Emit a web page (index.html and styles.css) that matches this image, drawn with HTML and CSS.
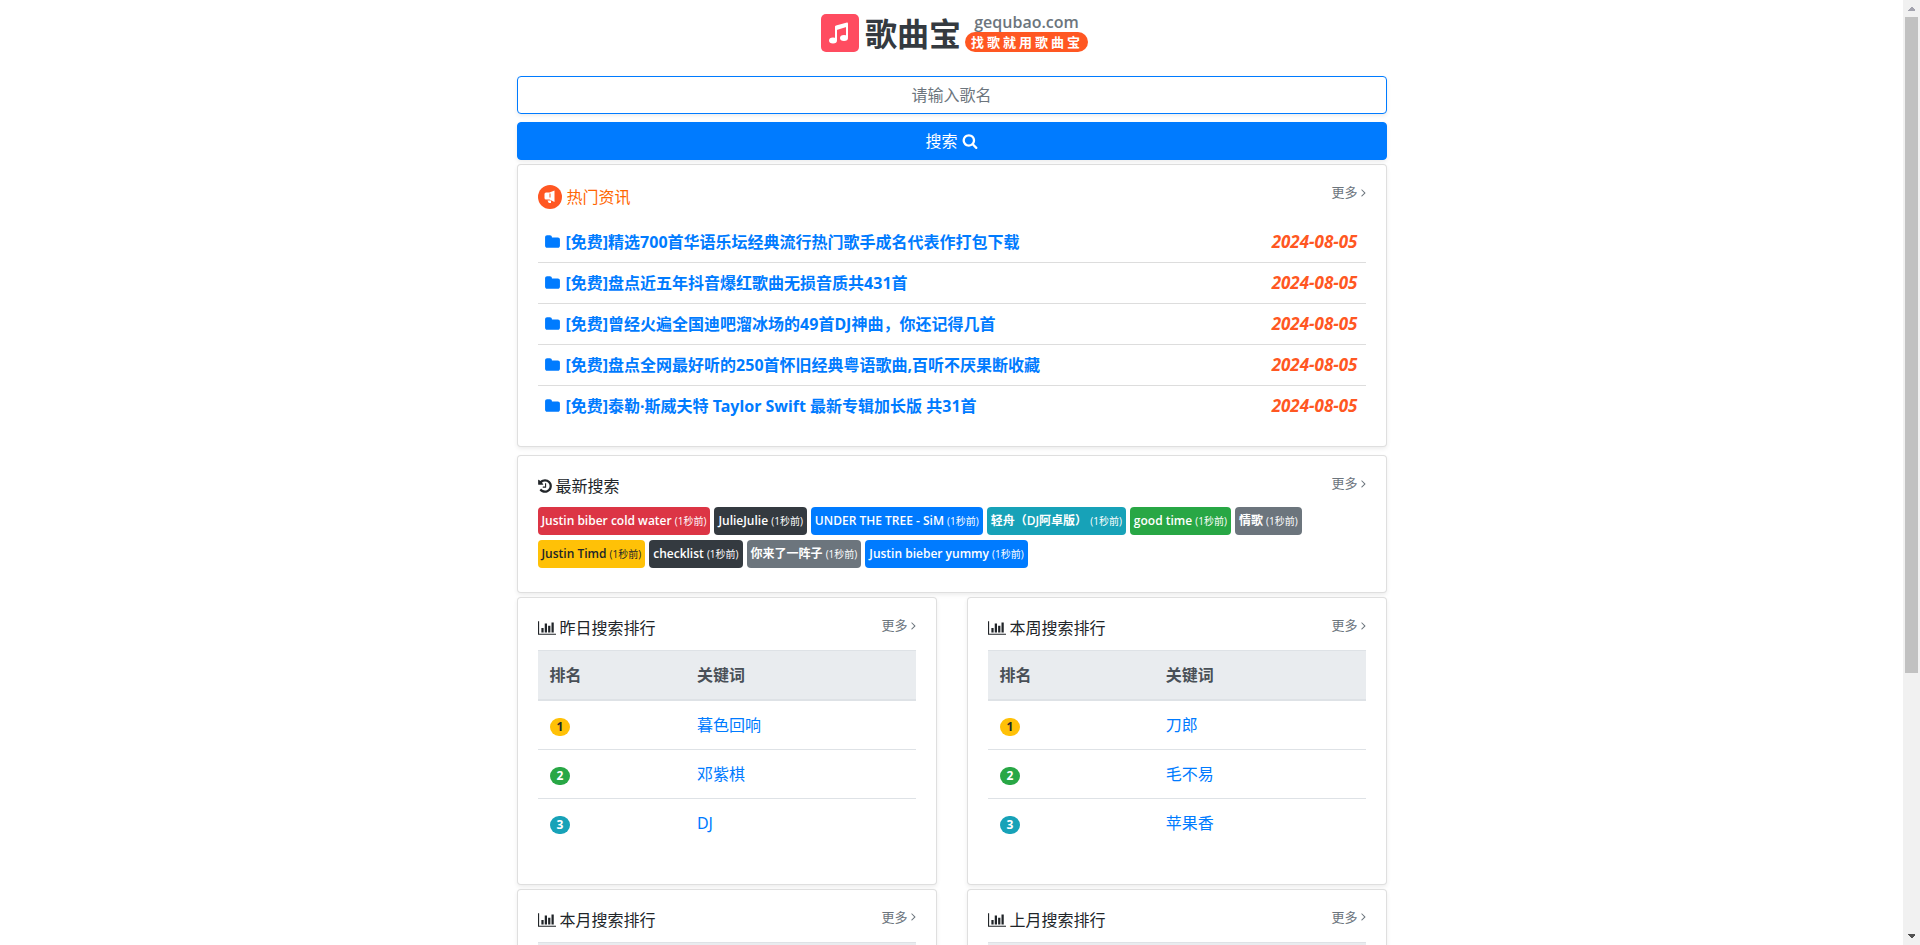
FILE: index.html
```html
<!DOCTYPE html>
<html lang="zh-CN">
<head>
<meta charset="utf-8">
<title>歌曲宝</title>
<link rel="stylesheet" href="styles.css">
</head>
<body>
<svg class="sprite" aria-hidden="true">
  <symbol id="search" viewBox="0 0 1664 1792"><path d="M1152 832q0-185-131.500-316.500t-316.500-131.500-316.500 131.500-131.500 316.500 131.500 316.500 316.500 131.500 316.500-131.500 131.500-316.500zm512 832q0 52-38 90t-90 38q-54 0-90-38l-343-342q-179 124-399 124-143 0-273.500-55.500t-225-150-150-225-55.500-273.500 55.500-273.500 150-225 225-150 273.500-55.500 273.500 55.500 225 150 150 225 55.500 273.500q0 220-124 399l343 343q37 37 37 90z"/></symbol>
  <symbol id="folder" viewBox="0 0 1664 1792"><path d="M1664 608v704q0 92-66 158t-158 66h-1216q-92 0-158-66t-66-158v-960q0-92 66-158t158-66h320q92 0 158 66t66 158v32h672q92 0 158 66t66 158z"/></symbol>
  <symbol id="chart" viewBox="0 0 2048 1792"><path d="M640 896v512h-256v-512h256zm384-512v1024h-256v-1024h256zm1024 1152v128h-2048v-1536h128v1408h1920zm-640-896v768h-256v-768h256zm384-384v1152h-256v-1152h256z"/></symbol>
  <symbol id="history" viewBox="0 0 1536 1792"><path d="M1536 896q0 156-61 298t-164 245-245 164-298 61q-172 0-327-72.500t-264-204.500q-7-10-6.500-22.500t8.500-20.500l137-138q10-9 25-9 16 2 23 12 73 95 179 147t225 52q104 0 198.500-40.500t163.500-109.500 109.500-163.500 40.500-198.500-40.500-198.500-109.500-163.500-163.500-109.500-198.500-40.500q-98 0-188 35.500t-160 101.500l137 138q31 30 14 69-17 40-59 40h-448q-26 0-45-19t-19-45v-448q0-42 40-59 39-17 69 14l130 129q107-101 244.500-156.500t284.500-55.500q156 0 298 61t245 164 164 245 61 298zm-640-288v448q0 14-9 23t-23 9h-320q-14 0-23-9t-9-23v-64q0-14 9-23t23-9h224v-352q0-14 9-23t23-9h64q14 0 23 9t9 23z"/></symbol>
  <symbol id="angle" viewBox="0 0 640 1792"><path d="M595 960q0 13-10 23l-466 466q-10 10-23 10t-23-10l-50-50q-10-10-10-23t10-23l393-393-393-393q-10-10-10-23t10-23l50-50q10-10 23-10t23 10l466 466q10 10 10 23z"/></symbol>
</svg>
<div class="viewport">
  <main class="container">
    <header class="brand">
      <svg class="brand-icon" viewBox="0 0 38 38" aria-hidden="true"><rect width="38" height="38" rx="5" fill="#ff4c60"/><path d="M15 26V14M26 23.500V10" fill="none" stroke="#fff" stroke-width="2"/><path d="M14 12.500Q14 11.800 15 11.500L26 8.500Q27 8.400 27 9.200V12.500L14 16.500z" fill="#fff"/><ellipse cx="12" cy="26.500" rx="4" ry="3" fill="#fff"/><ellipse cx="23" cy="24" rx="4" ry="3" fill="#fff"/></svg>
      <h1 class="brand-name">歌曲宝</h1>
      <div class="brand-side">
        <span class="brand-domain">gequbao.com</span>
        <span class="brand-slogan">找歌就用歌曲宝</span>
      </div>
    </header>

    <form class="search">
      <input class="search-input" type="text" placeholder="请输入歌名" aria-label="请输入歌名">
      <button class="search-button" type="button">搜索 <svg class="icon icon-search"><use href="#search"/></svg></button>
    </form>

    <section class="card">
      <div class="card-head">
        <h2 class="card-title news-title"><svg class="news-icon" viewBox="0 0 24 24" aria-hidden="true"><circle cx="12" cy="12" r="12" fill="#ff5722"/><path d="M8 7.500h3.500l5-2v11.500l-5-2.500H8q-1.500 0-1.500-1.500V9q0-1.500 1.500-1.500z" fill="#fff"/><path d="M9.500 15.500h3.500v2.500h-2.200z" fill="#fff"/><path d="M12 8.500v4" stroke="#ff5722" stroke-width="1"/></svg>热门资讯</h2>
        <a class="more" href="#">更多 <svg class="icon icon-angle"><use href="#angle"/></svg></a>
      </div>
      <ul class="news">
        <li><a href="#"><svg class="icon icon-folder"><use href="#folder"/></svg>[免费]精选700首华语乐坛经典流行热门歌手成名代表作打包下载</a><time>2024-08-05</time></li>
        <li><a href="#"><svg class="icon icon-folder"><use href="#folder"/></svg>[免费]盘点近五年抖音爆红歌曲无损音质共431首</a><time>2024-08-05</time></li>
        <li><a href="#"><svg class="icon icon-folder"><use href="#folder"/></svg>[免费]曾经火遍全国迪吧溜冰场的49首DJ神曲，你还记得几首</a><time>2024-08-05</time></li>
        <li><a href="#"><svg class="icon icon-folder"><use href="#folder"/></svg>[免费]盘点全网最好听的250首怀旧经典粤语歌曲,百听不厌果断收藏</a><time>2024-08-05</time></li>
        <li><a href="#"><svg class="icon icon-folder"><use href="#folder"/></svg>[免费]泰勒·斯威夫特 Taylor Swift 最新专辑加长版 共31首</a><time>2024-08-05</time></li>
      </ul>
    </section>

    <section class="card card-recent">
      <div class="card-head">
        <h2 class="card-title"><svg class="icon icon-history"><use href="#history"/></svg>最新搜索</h2>
        <a class="more" href="#">更多 <svg class="icon icon-angle"><use href="#angle"/></svg></a>
      </div>
      <div class="tags">
        <a class="tag red" href="#">Justin biber cold water <small>(1秒前)</small></a>
        <a class="tag dark" href="#">JulieJulie <small>(1秒前)</small></a>
        <a class="tag blue" href="#">UNDER THE TREE - SiM <small>(1秒前)</small></a>
        <a class="tag teal" href="#">轻舟（DJ阿卓版） <small>(1秒前)</small></a>
        <a class="tag green" href="#">good time <small>(1秒前)</small></a>
        <a class="tag gray" href="#">情歌 <small>(1秒前)</small></a>
        <a class="tag yellow" href="#">Justin Timd <small>(1秒前)</small></a>
        <a class="tag dark" href="#">checklist <small>(1秒前)</small></a>
        <a class="tag gray" href="#">你来了一阵子 <small>(1秒前)</small></a>
        <a class="tag blue" href="#">Justin bieber yummy <small>(1秒前)</small></a>
      </div>
    </section>

    <div class="ranks">
      <section class="card">
        <div class="card-head">
          <h2 class="card-title"><svg class="icon icon-chart"><use href="#chart"/></svg>昨日搜索排行</h2>
          <a class="more" href="#">更多 <svg class="icon icon-angle"><use href="#angle"/></svg></a>
        </div>
        <table class="rank">
          <thead><tr><th class="col-day">排名</th><th>关键词</th></tr></thead>
          <tbody>
            <tr><td><span class="pill yellow">1</span></td><td><a href="#">暮色回响</a></td></tr>
            <tr><td><span class="pill green">2</span></td><td><a href="#">邓紫棋</a></td></tr>
            <tr><td><span class="pill teal">3</span></td><td><a href="#">DJ</a></td></tr>
          </tbody>
        </table>
      </section>
      <section class="card">
        <div class="card-head">
          <h2 class="card-title"><svg class="icon icon-chart"><use href="#chart"/></svg>本周搜索排行</h2>
          <a class="more" href="#">更多 <svg class="icon icon-angle"><use href="#angle"/></svg></a>
        </div>
        <table class="rank">
          <thead><tr><th class="col-week">排名</th><th>关键词</th></tr></thead>
          <tbody>
            <tr><td><span class="pill yellow">1</span></td><td><a href="#">刀郎</a></td></tr>
            <tr><td><span class="pill green">2</span></td><td><a href="#">毛不易</a></td></tr>
            <tr><td><span class="pill teal">3</span></td><td><a href="#">苹果香</a></td></tr>
          </tbody>
        </table>
      </section>
      <section class="card">
        <div class="card-head">
          <h2 class="card-title"><svg class="icon icon-chart"><use href="#chart"/></svg>本月搜索排行</h2>
          <a class="more" href="#">更多 <svg class="icon icon-angle"><use href="#angle"/></svg></a>
        </div>
        <table class="rank">
          <thead><tr><th class="col-day"></th><th></th></tr></thead>
        </table>
      </section>
      <section class="card">
        <div class="card-head">
          <h2 class="card-title"><svg class="icon icon-chart"><use href="#chart"/></svg>上月搜索排行</h2>
          <a class="more" href="#">更多 <svg class="icon icon-angle"><use href="#angle"/></svg></a>
        </div>
        <table class="rank">
          <thead><tr><th class="col-week"></th><th></th></tr></thead>
        </table>
      </section>
    </div>
  </main>
</div>
<div class="scrollbar" aria-hidden="true">
  <svg class="scroll-arrow" viewBox="0 0 17 17" shape-rendering="crispEdges"><path d="M5 11h7v-1l-3-3h-1l-3 3z" fill="#a3a3ae"/></svg>
  <div class="scroll-track"><div class="scroll-thumb"></div></div>
  <svg class="scroll-arrow" viewBox="0 0 17 17" shape-rendering="crispEdges"><path d="M5 6h7v1l-3 3h-1l-3-3z" fill="#505050"/></svg>
</div>
</body>
</html>
```
FILE: styles.css
```css
*, *::before, *::after { box-sizing: border-box; }

body {
  margin: 0;
  height: 100vh;
  display: flex;
  overflow: hidden;
  background: #fff;
  color: #212529;
  font: 16px/24px "Noto Sans", "Noto Sans CJK SC", sans-serif;
}

a { color: #007bff; text-decoration: none; }
h1, h2 { margin: 0; font-weight: 400; }

.sprite { position: absolute; width: 0; height: 0; }
.viewport { flex: 1; min-width: 0; height: 100%; overflow: hidden; }
.container { max-width: 900px; margin: 0 auto; padding: 0 15px; }

.icon { fill: currentColor; height: 16px; }
.icon-search { width: 16px; }
.icon-folder { width: 15px; margin-right: 6px; }
.icon-chart { width: 18px; margin-right: 4px; }
.icon-history { width: 14px; margin-right: 4px; }
.icon-angle { width: 5px; height: 13px; }

.brand {
  display: flex;
  justify-content: center;
  align-items: flex-start;
  padding: 12px 0 16px 6px;
}
.brand-icon { width: 38px; height: 38px; margin: 2px 6px 0 0; }
.brand-name { font-size: 32px; line-height: 44px; font-weight: 700; color: #343a40; }
.brand-side { display: flex; flex-direction: column; align-items: center; margin-left: 4px; }
.brand-domain {
  color: #6c757d;
  font-family: "Open Sans", sans-serif;
  font-size: 16px;
  line-height: 20px;
  font-weight: 600;
}
.brand-slogan {
  padding: 0 5px 0 6px;
  border-radius: 10px;
  background: #ff5722;
  color: #fff;
  font-size: 13px;
  line-height: 20px;
  font-weight: 700;
  letter-spacing: 3px;
}

.search { display: flex; flex-direction: column; gap: 8px; padding-top: 4px; }
.search-input, .search-button {
  width: 100%;
  height: 38px;
  border: 1px solid #007bff;
  border-radius: 4px;
  font: inherit;
  text-align: center;
  box-shadow: 0 2px 4px rgba(0, 0, 0, .075);
}
.search-input::placeholder { color: #6c757d; opacity: 1; }
.search-button {
  display: flex;
  justify-content: center;
  align-items: center;
  gap: 4px;
  background: #007bff;
  color: #fff;
}

.card {
  margin-top: 4px;
  padding: 20px;
  border: 1px solid rgba(0, 0, 0, .125);
  border-radius: 4px;
  background: #fff;
  box-shadow: 0 2px 4px rgba(0, 0, 0, .075);
}
.card-head { display: flex; justify-content: space-between; align-items: flex-start; }
.card-title { display: flex; align-items: center; font-size: 16px; line-height: 20px; }
.more {
  display: flex;
  align-items: center;
  gap: 3px;
  color: #6c757d;
  font-size: 13px;
  line-height: 14px;
}

.news-title { color: #f60; line-height: 24px; }
.news-icon { width: 24px; height: 24px; margin-right: 5px; }
.news { list-style: none; margin: 13px 0 0; padding: 0; }
.news li {
  display: flex;
  justify-content: space-between;
  align-items: center;
  padding: 8px 8px 8px 7px;
  border-bottom: 1px solid #ddd;
}
.news li:last-child { border-bottom: 0; }
.news a { display: flex; align-items: center; font-weight: 700; }
.news time {
  color: #ff5722;
  font-family: "Open Sans", sans-serif;
  font-size: 17px;
  font-weight: 700;
  font-style: italic;
}

.card-recent { margin-top: 8px; }
.tags { display: flex; flex-wrap: wrap; gap: 5px 4px; margin: 11px 0 4px; }
.tag {
  padding: 4px;
  border-radius: 4px;
  color: #fff;
  font-family: "Open Sans", "Noto Sans CJK SC", sans-serif;
  font-size: 12px;
  line-height: 20px;
  font-weight: 600;
}
.tag small { font-size: 10px; font-weight: 400; }

.red { background: #dc3545; }
.dark { background: #343a40; }
.blue { background: #007bff; }
.teal { background: #17a2b8; }
.green { background: #28a745; }
.gray { background: #6c757d; }
.yellow { background: #ffc107; color: #212529; }

.ranks { display: grid; grid-template-columns: 1fr 1fr; column-gap: 30px; }
.rank { width: 100%; margin: 12px 0 16px; border-collapse: collapse; table-layout: fixed; }
.rank th, .rank td { height: 49px; padding: 12px; border-top: 1px solid #dee2e6; text-align: left; }
.rank th { border-bottom: 2px solid #dee2e6; background: #e9ecef; color: #495057; font-weight: 700; }
.col-day { width: 39%; }
.col-week { width: 44%; }
.pill {
  display: inline-block;
  padding: 0 7px;
  border-radius: 10px;
  color: #fff;
  font-size: 12px;
  line-height: 18px;
  font-weight: 700;
}
.pill.yellow { color: #212529; }

.scrollbar { width: 17px; display: flex; flex-direction: column; background: #f1f1f1; }
.scroll-arrow { width: 17px; height: 17px; }
.scroll-track { flex: 1; padding: 0 2px; }
.scroll-thumb { height: 72%; background: #c1c1c1; }
```
